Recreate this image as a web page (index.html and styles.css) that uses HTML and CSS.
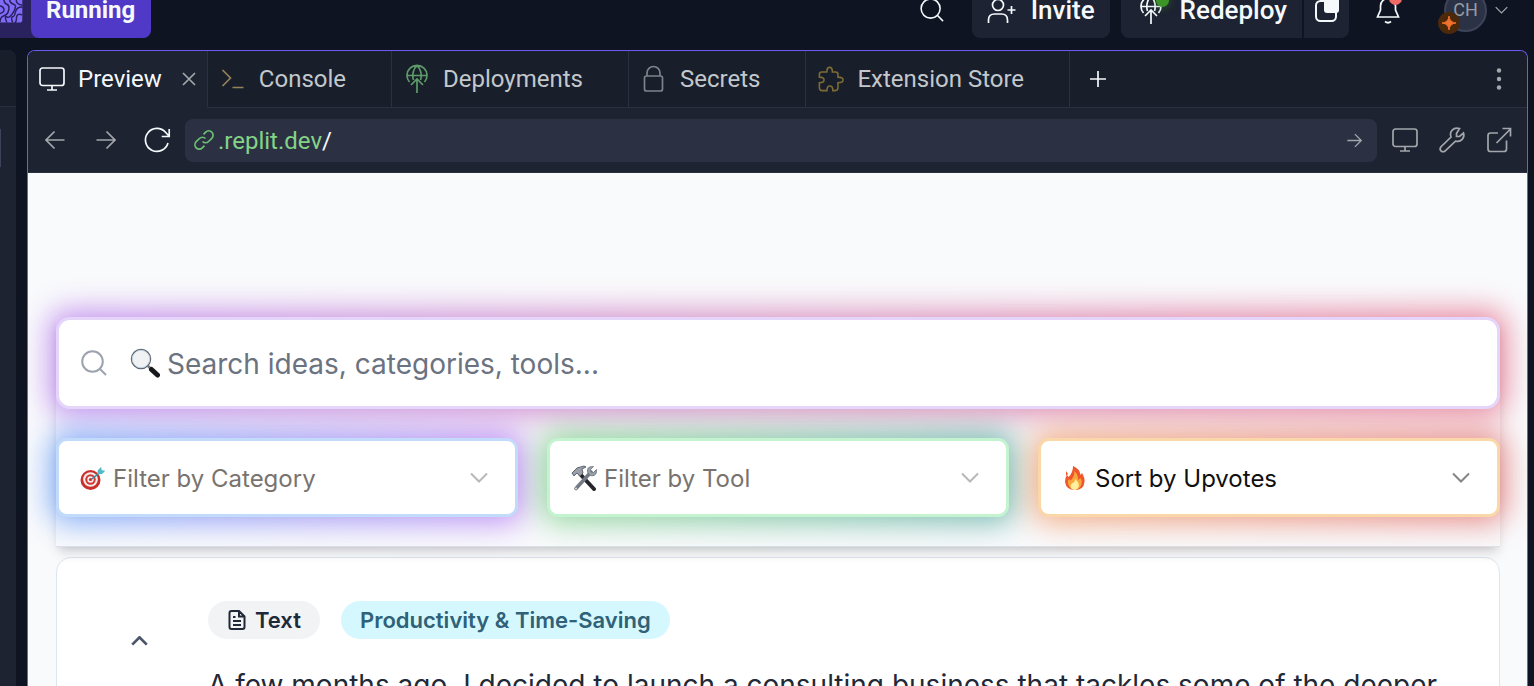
FILE: index.html
```html
<!DOCTYPE html>
<html lang="en">
<head>
<meta charset="utf-8">
<title>Preview</title>
<link rel="stylesheet" href="styles.css">
</head>
<body>
<svg class="defs" aria-hidden="true">
  <defs>
    <symbol id="monitor" viewBox="0 0 26 26"><rect x="1" y="2" width="24" height="17.500" rx="2.500"/><path d="M13 19.500V24M8 24h10"/></symbol>
    <symbol id="globe-up" viewBox="0 0 22 30"><path d="M3.500 18A10 10 0 1 1 18.500 18M1 11.500h20M7.500 16C5.500 10 8 4 11 1.500C14 4 16.500 10 14.500 16M11 29V15M5 21l6-6 6 6"/></symbol>
    <symbol id="chevron" viewBox="0 0 18 11"><path d="M1 1.500l8 8 8-8"/></symbol>
    <symbol id="arrow" viewBox="0 0 20 20"><path d="M0.500 10h18.500M10.500 1.500L19 10l-8.500 8.500"/></symbol>
    <symbol id="lens" viewBox="0 0 26 26"><circle cx="11.500" cy="11.500" r="10.300"/><path d="M19 19l6 6"/></symbol>
  </defs>
</svg>

<header class="topbar">
  <div class="run-group">
    <svg class="run-logo" viewBox="0 0 32 56" aria-hidden="true">
      <rect x="-4" y="14" width="27" height="27" rx="3" fill="#7f6bf8"/>
      <g fill="none" stroke="#2a215f" stroke-width="1.500">
        <path d="M-2 24q5-1 6 3t-6 5"/>
        <path d="M4 17q0 4 3 5t2 6-5 6-4 7"/>
        <path d="M10 17q0 4 4 5t0 8-7 5 0 6"/>
        <path d="M17 17q-1 5 6 6M23 25q-6 0-7 5t-3 5 0 6"/>
        <path d="M23 33q-6-2-6 3t-2 5"/>
      </g>
    </svg>
    <button class="run-button" type="button">Running</button>
  </div>
  <div class="top-actions">
    <button class="plain" type="button" aria-label="Search"><svg class="line ic-24" viewBox="0 0 26 26"><use href="#lens"/></svg></button>
    <button class="chip invite" type="button">
      <svg class="line ic-person" viewBox="0 0 30 30" aria-hidden="true"><circle cx="11" cy="10" r="5.500"/><path d="M1.500 28v-3q0-6 6-6h7q6 0 6 6v3M24.500 11v8M20.500 15h8"/></svg>
      Invite
    </button>
    <div class="split">
      <button class="chip redeploy" type="button">
        <span class="deploy-mark"><svg class="line ic-globe" aria-hidden="true"><use href="#globe-up"/></svg><span class="dot green"></span></span>
        Redeploy
      </button>
      <button class="chip window" type="button" aria-label="Open window"><svg class="ic-24" viewBox="0 0 24 24"><rect x="1" y="3" width="20" height="20" rx="4.500" fill="none" stroke="#f5f9fc" stroke-width="2"/><rect x="9" y="-2" width="15" height="17" rx="3" fill="#f5f9fc"/></svg></button>
    </div>
    <button class="plain bell" type="button" aria-label="Notifications">
      <svg class="line ic-bell" viewBox="0 0 24 28" aria-hidden="true"><path d="M4.500 14V10a7.500 7.500 0 0 1 15 0v4l3 7H1.500zM9 25.500q3 2.500 6 0"/></svg>
      <span class="dot red"></span>
    </button>
    <button class="plain account" type="button" aria-label="Account">
      <span class="avatar">CH
        <svg class="spark" viewBox="0 0 22 22" aria-hidden="true"><circle cx="11" cy="11" r="11" fill="#4d290c"/><path d="M11 4Q11.500 10.500 18 11Q11.500 11.500 11 18Q10.500 11.500 4 11Q10.500 10.500 11 4Z" fill="#f0702c" stroke="#f0702c"/></svg>
      </span>
      <svg class="line dim ic-caret"><use href="#chevron"/></svg>
    </button>
  </div>
</header>

<div class="workspace">
  <aside class="side"><div class="side-tabs"></div><div class="side-field"></div></aside>

  <main class="pane">
    <nav class="tabs" aria-label="Panes">
      <div class="tab active">
        <button class="tab-label" type="button"><span class="slot"><svg class="line ic-26"><use href="#monitor"/></svg></span>Preview</button>
        <button class="tab-close" type="button" aria-label="Close"><svg class="line dim ic-14" viewBox="0 0 14 14"><path d="M1 1l12 12M13 1L1 13"/></svg></button>
      </div>
      <button class="tab" type="button"><span class="slot"><svg class="line sand ic-26" viewBox="0 0 26 26"><path d="M2.500 4l8 8-8 8M12.500 21.500h11"/></svg></span>Console</button>
      <button class="tab" type="button"><span class="slot"><svg class="line leaf ic-globe"><use href="#globe-up"/></svg></span>Deployments</button>
      <button class="tab" type="button"><span class="slot"><svg class="line gray ic-26" viewBox="0 0 26 26"><rect x="3.500" y="10" width="18" height="15" rx="2"/><path d="M6 10V7a6.500 6.500 0 0 1 13 0v3"/></svg></span>Secrets</button>
      <button class="tab" type="button"><span class="slot"><svg class="line gold ic-26" viewBox="0 0 28 28"><path d="M4 6.500h5.500q0-5 3-5t3 5H19q2.500 0 2.500 2.500v3q5.500 0 5.500 3t-5.500 3v5.500q0 3-3 3h-2.500q0-5-3.200-5t-3.200 5H4.500q-3 0-3-3V18q5 0 5-3t-5-3V9q0-2.500 2.500-2.500z"/></svg></span>Extension Store</button>
      <button class="tab-add" type="button" aria-label="New tab"><svg class="line ic-16" viewBox="0 0 16 16"><path d="M8 0v16M0 8h16"/></svg></button>
      <button class="tab-more" type="button" aria-label="More"><svg class="ic-dots" viewBox="0 0 6 22"><g fill="#a3a8ad"><circle cx="3" cy="2.500" r="2.200"/><circle cx="3" cy="11" r="2.200"/><circle cx="3" cy="19.500" r="2.200"/></g></svg></button>
    </nav>

    <div class="toolbar">
      <button class="plain" type="button" aria-label="Back"><svg class="line dim flip ic-20"><use href="#arrow"/></svg></button>
      <button class="plain" type="button" aria-label="Forward"><svg class="line dim ic-20"><use href="#arrow"/></svg></button>
      <button class="plain" type="button" aria-label="Reload"><svg class="line ic-26" viewBox="0 0 26 26"><path d="M24 16A11.500 11.500 0 1 1 21.500 5.200L25 9M25.200 2v7.500h-7.500"/></svg></button>
      <div class="url">
        <svg class="line link ic-20" viewBox="0 0 20 20" aria-hidden="true"><path d="M8.500 11.500a4.300 4.300 0 0 0 6.100 0l3.200-3.200a4.300 4.300 0 0 0-6.100-6.100L9.500 4.400M11.500 8.500a4.300 4.300 0 0 0-6.100 0l-3.200 3.200a4.300 4.300 0 0 0 6.100 6.100l2.200-2.200"/></svg>
        <span class="host">.replit.dev<b>/</b></span>
        <button class="plain go" type="button" aria-label="Go"><svg class="line dim ic-15" viewBox="0 0 20 20"><use href="#arrow"/></svg></button>
      </div>
      <button class="plain" type="button" aria-label="Device size"><svg class="line dim ic-26"><use href="#monitor"/></svg></button>
      <button class="plain" type="button" aria-label="Developer tools"><svg class="line dim ic-26" viewBox="0 0 26 26"><path d="M17.500 6.500v3h3l4-3.500q1.200 3.600-1.300 6.400t-6.700 1.800L6 24q-2 1.500-3.900 0t-.3-4L12 10q-1.500-4 1.200-6.900T20.500 1.500z"/></svg></button>
      <button class="plain" type="button" aria-label="Open in new window"><svg class="line dim ic-26" viewBox="0 0 26 26"><path d="M12 6H4.500Q2 6 2 8.500V22q0 2.500 2.500 2.500H18q2.500 0 2.500-2.500v-8.500M10.500 16L24.500 2M16.500 1.500h8v8"/></svg></button>
    </div>

    <section class="page">
      <div class="filters">
        <label class="field search">
          <svg class="field-icon ic-26" viewBox="0 0 26 26" aria-hidden="true"><use href="#lens"/></svg>
          <svg class="emoji ic-30" viewBox="0 0 30 30" aria-hidden="true"><path d="M18 18l3 3" stroke="#777c80" stroke-width="2.500"/><path d="M21.500 21.500l6 5.500" stroke="#17191c" stroke-width="5" stroke-linecap="round"/><circle cx="11" cy="11" r="9.500" fill="#f0f2f4" stroke="#5d6670" stroke-width="1.500"/><circle cx="11" cy="11" r="8.700" fill="none" stroke="#c5d5e3"/></svg>
          <input type="text" aria-label="Search ideas" placeholder="Search ideas, categories, tools...">
        </label>
        <div class="filter-row">
          <label class="field category">
            <svg class="emoji ic-26" viewBox="0 0 26 26" aria-hidden="true"><circle cx="10.500" cy="15" r="10" fill="#c9302c"/><circle cx="10.500" cy="14.500" r="7.300" fill="#f3eeee"/><circle cx="10.500" cy="14.500" r="5.200" fill="#d53832"/><circle cx="10.500" cy="14.500" r="3.200" fill="#f3eeee"/><circle cx="10.500" cy="14.500" r="1.600" fill="#c9302c"/><path d="M11 14.500l9-7" stroke="#2f8d9b" stroke-width="1.500"/><path d="M17 9.500l1-4.500 3-3 .8 3.200 3.500.5-3.300 3.300z" fill="#54b9c6"/></svg>
            <select aria-label="Filter by Category"><option>Filter by Category</option></select>
            <svg class="caret"><use href="#chevron"/></svg>
          </label>
          <label class="field tool">
            <svg class="emoji ic-26" viewBox="0 0 26 26" aria-hidden="true"><path d="M9 9l14 15" stroke="#24262a" stroke-width="4" stroke-linecap="round"/><path d="M20 7L5 23.500" stroke="#747a85" stroke-width="3.600" stroke-linecap="round"/><path d="M1 8l5-5 7-2 2 1-4 2 1 4-3 3-3-3-3 3z" fill="#9aa0aa" stroke="#5f6670"/><path d="M22.500 1.500l-3 3 .5 2.500 2.500.5 3-3q.5 5-2.500 6t-5-1-1.500-5 6-3z" fill="#9aa0aa" stroke="#686e78" stroke-width=".8"/><circle cx="5" cy="23.500" r="1" fill="#dfe2e6"/></svg>
            <select aria-label="Filter by Tool"><option>Filter by Tool</option></select>
            <svg class="caret"><use href="#chevron"/></svg>
          </label>
          <label class="field sort">
            <svg class="emoji ic-26" viewBox="0 0 26 26" aria-hidden="true"><path d="M11 1q7 3 7.500 9l1.500-2q3 5 2.500 9-.8 8-9.500 8T3 17q-.2-4 2-7l1.500 2Q11 8 11 1z" fill="#f0562b"/><path d="M4 6l2 3-2 2z" fill="#f0562b"/><path d="M12.500 6q4 4 3.500 9l2.500-2q2 3 1 6-1.500 5.500-6.500 5.500T6 19q-1-3 1-5l1.500 1.500Q12.500 12 12.500 6z" fill="#f9a63a"/><path d="M13 14q5 4 3.500 8-1.500 3-3.500 3-4 0-4.500-4 0-2 1.500-2.500Q13 17 13 14z" fill="#fff0a0"/></svg>
            <select aria-label="Sort"><option>Sort by Upvotes</option></select>
            <svg class="caret"><use href="#chevron"/></svg>
          </label>
        </div>
      </div>

      <article class="card">
        <button class="vote" type="button" aria-label="Upvote"><svg class="ic-caret-up"><use href="#chevron"/></svg></button>
        <div class="card-body">
          <div class="tags">
            <span class="tag text"><svg class="ic-20" viewBox="0 0 20 20" aria-hidden="true"><path d="M12 1H4.500Q2.500 1 2.500 3v14q0 2 2 2h11q2 0 2-2V6.500zM12 1v5.500h5.500M6 7h2.500M6 11h8M6 15h8"/></svg>Text</span>
            <span class="tag topic">Productivity &amp; Time-Saving</span>
          </div>
          <p class="idea">A few months ago, I decided to launch a consulting business that tackles some of the deeper</p>
        </div>
      </article>
    </section>
  </main>
</div>
</body>
</html>
```
FILE: styles.css
```css
* { box-sizing: border-box; }
html, body { height: 100%; }
body {
  margin: 0;
  display: flex;
  flex-direction: column;
  overflow: hidden;
  background: #0e1422;
  color: #f5f9fc;
  font-family: Roboto, "Noto Sans", sans-serif;
  font-size: 24px;
}
button, input, select { font: inherit; color: inherit; }
button { border: 0; padding: 0; background: none; display: flex; align-items: center; }
svg { display: block; flex: none; }
.defs { position: absolute; width: 0; height: 0; }

.line { fill: none; stroke: #f5f9fc; stroke-width: 1.7; overflow: visible; }
.dim { stroke: #a3a7ab; }
.sand { stroke: #94835a; }
.leaf { stroke: #5d9c68; }
.gray { stroke: #7f828b; }
.gold { stroke: #7d6c35; }
.link { stroke: #6cc070; }
.flip { transform: scaleX(-1); }
.ic-14 { width: 14px; height: 14px; }
.ic-15 { width: 15px; height: 15px; }
.ic-16 { width: 16px; height: 16px; }
.ic-20 { width: 20px; height: 20px; }
.ic-24 { width: 24px; height: 24px; }
.ic-26 { width: 26px; height: 26px; }
.ic-30 { width: 30px; height: 30px; }
.ic-person { width: 30px; height: 30px; }
.ic-globe { width: 22px; height: 30px; }
.ic-bell { width: 24px; height: 28px; }
.ic-dots { width: 6px; height: 22px; }
.ic-caret { width: 13px; height: 8px; }

/* Top bar: its upper edge is scrolled out of the window */
.topbar {
  flex: none;
  display: flex;
  justify-content: space-between;
  height: 56px;
  margin-top: -18px;
  font-weight: 500;
  line-height: 20px;
}
.run-group { display: flex; background: #2a215f; border-radius: 0 8px 8px 0; }
.run-logo { width: 31px; height: 56px; }
.run-button { padding: 0 16px 0 15px; background: #4f39c6; border-radius: 8px; font-weight: 700; }
.top-actions { display: flex; align-items: center; padding-right: 26px; }
.chip { height: 56px; background: #1d2332; border-radius: 8px; font-size: 26px; }
.invite { gap: 14px; margin: 0 11px 0 28px; padding: 0 15px; }
.split { display: flex; gap: 2px; }
.redeploy { gap: 18px; padding: 0 15px 0 19px; border-radius: 8px 0 0 8px; }
.window { padding: 0 10px 0 11px; border-radius: 0 8px 8px 0; }
.deploy-mark, .bell, .avatar { position: relative; }
.dot { position: absolute; width: 13px; height: 13px; border-radius: 50%; }
.green { top: -1px; right: -7px; background: #3d9426; box-shadow: 0 0 8px #3d942688; }
.red { top: -4px; right: -2px; background: #f06a65; }
.bell { margin: 0 44px 0 27px; }
.account { gap: 8px; }
.avatar {
  display: grid;
  place-items: center;
  width: 43px;
  height: 43px;
  border: 2px solid #3d4457;
  border-radius: 50%;
  background: #2b3245;
  color: #989ca4;
  font-size: 18px;
  font-weight: 400;
}
.spark { position: absolute; left: -8px; bottom: -4px; width: 22px; height: 22px; }

/* Workspace */
.workspace { flex: 1; min-height: 0; display: flex; gap: 11px; padding: 12px 6px 0 0; }
.side { flex: none; width: 16px; background: #1e2332; border-radius: 0 8px 0 0; overflow: hidden; }
.side-tabs { height: 57px; background: #191e2b; border-bottom: 1px solid #272d3d; }
.side-field { width: 1px; height: 38px; margin-top: 22px; background: #3c445c; }
.pane {
  flex: 1;
  min-width: 0;
  display: flex;
  flex-direction: column;
  overflow: hidden;
  border: 1px solid #7058f0;
  border-bottom: 0;
  border-radius: 8px 8px 0 0;
  background: #1e2332;
}
.tabs { flex: none; display: flex; height: 57px; background: #191e2b; }
.tab, .tab-add, .tab-more { border-bottom: 1px solid #2b3142; }
.tab {
  display: flex;
  align-items: center;
  gap: 13px;
  padding: 0 45px 0 12px;
  border-right: 1px solid #2b3142;
  color: #c2c8cc;
  white-space: nowrap;
}
.tab.active { padding: 0 11px 0 11px; gap: 20px; background: #1e2332; border-bottom-color: #1e2332; color: #f5f9fc; }
.tab-label { gap: 13px; }
.slot { display: grid; place-items: center; width: 26px; height: 30px; }
.tab-add { padding-left: 20px; }
.tab-more { flex: 1; justify-content: flex-end; padding-right: 25px; }

.toolbar {
  flex: none;
  display: flex;
  align-items: center;
  height: 65px;
  padding: 0 15px 0 17px;
  gap: 21px;
  border-bottom: 1px solid #2b3142;
}
.toolbar > .plain:nth-child(2) { margin: 0 7px 0 10px; }
.url {
  flex: 1;
  display: flex;
  align-items: center;
  gap: 4px;
  height: 43px;
  margin: 0 -6px 0 -6px;
  padding: 0 15px 0 9px;
  border-radius: 8px;
  background: #2b3143;
}
.host { padding-top: 2px; color: #84d487; }
.host b { color: #f5f9fc; font-weight: 400; }
.go { margin-left: auto; }

/* Previewed page */
.page {
  flex: 1;
  min-height: 0;
  overflow: hidden;
  padding: 144px 27px 0 28px;
  background: #f9fafc;
  color: #1f2937;
  font-family: Inter, "Noto Sans", sans-serif;
}
.filters {
  position: relative;
  z-index: 1;
  padding-bottom: 29px;
  border-bottom: 1px solid #dde1ea;
  background: #f9fafc;
  box-shadow: 0 8px 12px -2px rgba(0, 0, 0, .12), 0 4px 8px -4px rgba(0, 0, 0, .12);
}
.filter-row { display: grid; grid-template-columns: repeat(3, 1fr); gap: 29px; margin-top: 29px; }
.field {
  position: relative;
  display: flex;
  align-items: center;
  height: 79px;
  padding: 0 27px 0 21px;
  border: 3px solid;
  border-radius: 11px;
  background: #fff;
}
/* Gradient glow behind each control */
.field::before {
  content: "";
  position: absolute;
  z-index: -1;
  inset: -9px;
  border-radius: 16px;
  filter: blur(15px);
  opacity: .62;
}
.search { height: 92px; padding-left: 22px; border-color: #e6d5fb; border-radius: 14px; }
.search::before { background: linear-gradient(90deg, #a050e8, #c4529f, #df3f62); }
.category { border-color: #c2dbfb; }
.category::before { background: linear-gradient(90deg, #3b82f6, #a050f0); }
.tool { border-color: #c4f3d0; }
.tool::before { background: linear-gradient(90deg, #5bc465, #2b9288); }
.sort { border-color: #f9d7a9; color: #101010; }
.sort::before { background: linear-gradient(90deg, #f08340, #dc4848); }
.field input, .field select {
  flex: 1;
  min-width: 0;
  padding: 2px 0 0;
  border: 0;
  outline: 0;
  appearance: none;
  background: none;
}
.search input { font-size: 28px; }
.search input::placeholder { color: #6b7280; opacity: 1; }
.category select, .tool select { color: #78736e; }
.field-icon { fill: none; stroke: #9ca3af; stroke-width: 2; overflow: visible; margin-right: 23px; }
.emoji { margin-right: 7px; fill: none; }
.caret { width: 18px; height: 11px; fill: none; stroke: #b8b8b8; stroke-width: 2; }
.sort .caret { stroke: #858585; }

.card {
  display: flex;
  margin-top: 10px;
  padding: 43px 42px;
  border: 1px solid #dfe5ee;
  border-radius: 15px;
  background: #fff;
}
.vote { width: 80px; height: 80px; justify-content: center; margin-right: 29px; }
.ic-caret-up { width: 17px; height: 10px; transform: scaleY(-1); fill: none; stroke: #4b5568; stroke-width: 3; }
.card-body { flex: 1; min-width: 0; }
.tags { display: flex; gap: 21px; }
.tag {
  display: flex;
  align-items: center;
  gap: 8px;
  height: 38px;
  padding: 0 19px;
  border-radius: 19px;
  font-size: 22px;
  font-weight: 600;
}
.tag svg { fill: none; stroke: #1f2937; stroke-width: 2; }
.tag.text { background: #f2f3f5; }
.tag.topic { background: #d5f8fe; color: #2f6178; }
.idea { margin: 24px 0 0; font-size: 28px; line-height: 44px; white-space: nowrap; }
```
